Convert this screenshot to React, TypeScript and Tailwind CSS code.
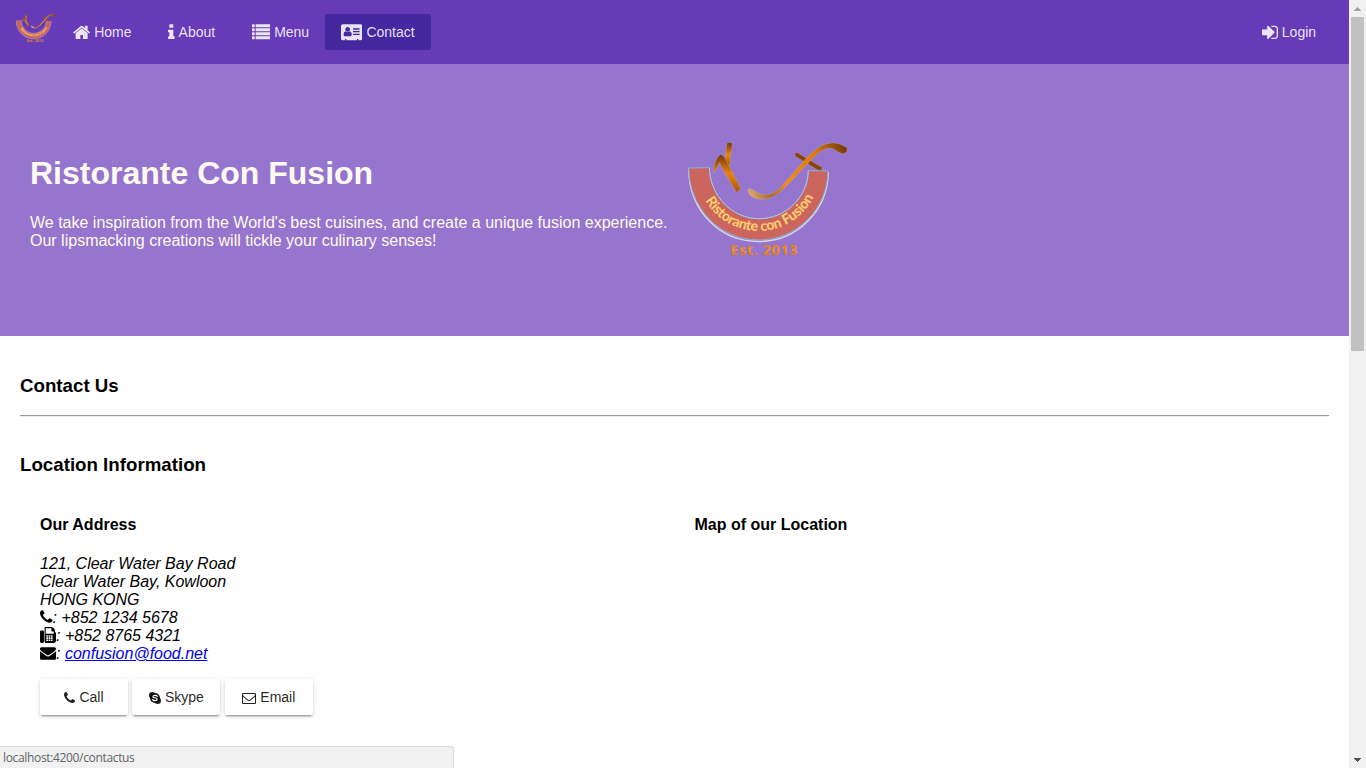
import { useId, type ReactNode } from "react";

type IconDef = { box: string; ratio: number; body: ReactNode };

const icons: Record<string, IconDef> = {
  home: {
    box: "64 0 1664 1792",
    ratio: 1664 / 1792,
    body: <path d="M1472 992v480q0 26-19 45t-45 19h-384v-384h-256v384h-384q-26 0-45-19t-19-45v-480q0-1 .5-3t.5-3l575-474 575 474q1 2 1 6zm223-69l-62 74q-8 9-21 11h-3q-13 0-21-7l-692-577-692 577q-12 8-24 7-13-2-21-11l-62-74q-8-10-7-23.5t11-21.5l719-599q32-26 76-26t76 26l244 204v-195q0-14 9-23t23-9h192q14 0 23 9t9 23v408l219 182q10 8 11 21.5t-7 23.5z" />,
  },
  info: {
    box: "576 0 640 1792",
    ratio: 640 / 1792,
    body: <path d="M1216 1344v128q0 26-19 45t-45 19h-512q-26 0-45-19t-19-45v-128q0-26 19-45t45-19h64v-384h-64q-26 0-45-19t-19-45v-128q0-26 19-45t45-19h384q26 0 45 19t19 45v576h64q26 0 45 19t19 45zm-128-1152v192q0 26-19 45t-45 19h-256q-26 0-45-19t-19-45v-192q0-26 19-45t45-19h256q26 0 45 19t19 45z" />,
  },
  list: {
    box: "0 0 1792 1792",
    ratio: 1,
    body: (
      <>
        {[128, 512, 896, 1280].map((y) => (
          <g key={y}>
            <rect x="0" y={y} width="256" height="290" rx="32" />
            <rect x="350" y={y} width="1442" height="290" rx="32" />
          </g>
        ))}
      </>
    ),
  },
  card: {
    box: "0 0 2048 1792",
    ratio: 2048 / 1792,
    body: (
      <path
        fillRule="evenodd"
        d="M160 128h1728q66 0 113 47t47 113v1216q0 66-47 113t-113 47h-224v-96q0-14-9-23t-23-9h-64q-14 0-23 9t-9 23v96h-1024v-96q0-14-9-23t-23-9h-64q-14 0-23 9t-9 23v96h-224q-66 0-113-47t-47-113v-1216q0-66 47-113t113-47zM1024 1131q0-64-9-117.5t-29.5-103-60.5-78-97-28.5q-6 4-30 18t-37.5 21.5-35.5 17.5-43 14.5-42 4.5-42-4.5-43-14.5-35.5-17.5-37.5-21.5-30-18q-57 0-97 28.5t-60.5 78-29.5 103-9 117.5 37 106.5 91 42.5h512q54 0 91-42.5t37-106.5zM867 605q0-94-66.5-160.5t-160.500-66.500-160.500 66.500-66.500 160.500 66.500 160.500 160.500 66.500 160.500-66.500 66.500-160.500zM1184 512h576q32 0 32 32v64q0 32-32 32h-576q-32 0-32-32v-64q0-32 32-32zM1184 768h576q32 0 32 32v64q0 32-32 32h-576q-32 0-32-32v-64q0-32 32-32zM1184 1024h576q32 0 32 32v64q0 32-32 32h-576q-32 0-32-32v-64q0-32 32-32z"
      />
    ),
  },
  signIn: {
    box: "128 0 1536 1792",
    ratio: 1536 / 1792,
    body: (
      <>
        <path
          d="M1312 896q0 26-19 45l-544 544q-19 19-45 19t-45-19-19-45v-288h-448q-26 0-45-19t-19-45v-384q0-26 19-45t45-19h448v-288q0-26 19-45t45-19 45 19l544 544q19 19 19 45z"
          stroke="currentColor"
          strokeWidth="50"
        />
        <path d="M1664 544v704q0 119-84.5 203.5t-203.5 84.5h-320q-13 0-22.5-9.5t-9.5-22.5q0-4-1-20t-.5-26.5 3-23.5 10-19.5 20.5-6.5h320q66 0 113-47t47-113v-704q0-66-47-113t-113-47h-312l-11.5-1-11.5-3-8-5.5-7-9-2-13.5q0-4-1-20t-.5-26.5 3-23.5 10-19.5 20.5-6.5h320q119 0 203.5 84.5t84.5 203.5z" />
      </>
    ),
  },
  phone: {
    box: "192 0 1408 1792",
    ratio: 1408 / 1792,
    body: <path d="M1600 1240q0 27-10 70.5t-21 68.5q-21 50-122 106-94 51-186 51-27 0-53-3.5t-57.5-12.5-47-14.5-55.5-20.5-49-18q-98-35-175-83-127-79-264-216t-216-264q-48-77-83-175-3-9-18-49t-20.5-55.5-14.5-47-12.5-57.5-3.5-53q0-92 51-186 56-101 106-122 25-11 68.5-21t70.5-10q14 0 21 3 18 6 53 76 11 19 30 54t35 63.5 31 53.5q3 4 17.5 25t21.5 35.5 7 28.5q0 20-28.5 50t-62 55-62 53-28.5 46q0 9 5 22.5t8.5 20.5 14 24 11.5 19q76 137 174 235t235 174q2 1 19 11.5t24 14 20.5 8.5 22.5 5q18 0 46-28.5t53-62 55-62 50-28.5q14 0 28.500 7t35.500 21.500 25 17.500q25 15 53.500 31t63.500 35 54 30q70 35 76 53 3 7 3 21z" />,
  },
  fax: {
    box: "0 0 1792 1792",
    ratio: 1,
    body: (
      <path
        fillRule="evenodd"
        d="M160 384h128q66 0 113 47t47 113v1088q0 66-47 113t-113 47h-128q-66 0-113-47t-47-113v-1088q0-66 47-113t113-47zM1664 542q58 34 93 93t35 129v768q0 106-75 181t-181 75h-864q-66 0-113-47t-47-113v-1536q0-40 28-68t68-28h672q40 0 88 20t76 48l152 152q28 28 48 76t20 88zM640 128v640h896v-256h-160q-40 0-68-28t-28-68v-288zM700 910h190v170h-190zM960 910h190v170h-190zM1220 910h190v170h-190zM700 1160h190v170h-190zM960 1160h190v170h-190zM1220 1160h190v170h-190zM700 1410h190v170h-190zM960 1410h190v170h-190zM1220 1410h190v170h-190z"
      />
    ),
  },
  envelope: {
    box: "0 0 1792 1792",
    ratio: 1,
    body: <path d="M1792 710v794q0 66-47 113t-113 47h-1472q-66 0-113-47t-47-113v-794q44 49 101 87 362 246 497 345 57 42 92.5 65.5t94.5 48 110 24.5h2q51 0 110-24.5t94.5-48 92.5-65.5q170-123 498-345 57-39 100-87zm0-294q0 79-49 151t-122 123q-376 261-468 325-10 7-42.5 31t-54 38.5-52 32.5-57.5 27-50 9h-2q-23 0-50-9t-57.5-27-52-32.5-54-38.5-42.5-31q-91-64-262-182.5t-205-142.5q-62-42-117-115.5t-55-136.5q0-78 41.5-130t118.5-52h1472q65 0 112.5 47t47.5 113z" />,
  },
  envelopeOpen: {
    box: "0 0 1792 1792",
    ratio: 1,
    body: <path d="M1664 1504v-768q-32 36-69 66-268 206-426 338-51 43-83 67t-86.5 48.5-102.5 24.5h-2q-48 0-102.5-24.5t-86.5-48.5-83-67q-158-132-426-338-37-30-69-66v768q0 13 9.5 22.5t22.5 9.5h1472q13 0 22.5-9.5t9.5-22.5zm0-1051v-24.5l-.5-13-3-12.5-5.5-9-9-7.5-14-2.5h-1472q-13 0-22.5 9.5t-9.5 22.5q0 168 147 284 193 152 401 317 6 5 35 29.5t46 37.5 44.5 31.5 50.5 27.5 43 9h2q20 0 43-9t50.5-27.5 44.5-31.5 46-37.5 35-29.5q208-165 401-317 54-43 100.5-115.5t46.5-131.5zm128-37v1088q0 66-47 113t-113 47h-1472q-66 0-113-47t-47-113v-1088q0-66 47-113t113-47h1472q66 0 113 47t47 113z" />,
  },
  skype: {
    box: "0 0 1536 1792",
    ratio: 1536 / 1792,
    body: (
      <>
        <circle cx="420" cy="548" r="420" />
        <circle cx="1116" cy="1244" r="420" />
        <circle cx="768" cy="896" r="650" />
        <path
          d="M1060 690q-50-130-290-130-270 0-270 160 0 105 180 142l180 38q190 42 190 160 0 175-280 175-240 0-300-150"
          fill="none"
          stroke="white"
          strokeWidth="150"
          strokeLinecap="round"
        />
      </>
    ),
  },
};

function Icon({ name, size, className = "" }: { name: string; size: number; className?: string }) {
  const icon = icons[name];
  return (
    <svg
      className={`inline-block shrink-0 ${className}`}
      viewBox={icon.box}
      width={size * icon.ratio}
      height={size}
      fill="currentColor"
      aria-hidden="true"
    >
      {icon.body}
    </svg>
  );
}

function Logo({ className }: { className: string }) {
  const id = useId().replace(/[^a-zA-Z0-9]/g, "");
  return (
    <svg className={`shrink-0 ${className}`} viewBox="0 0 160 116" aria-label="Ristorante con Fusion">
      <defs>
        <linearGradient id={`${id}s`} x1="60" y1="50" x2="160" y2="5" gradientUnits="userSpaceOnUse">
          <stop offset="0" stopColor="#d9a878" />
          <stop offset="0.18" stopColor="#a86a28" />
          <stop offset="0.35" stopColor="#ee8c14" />
          <stop offset="0.7" stopColor="#d87c10" />
          <stop offset="1" stopColor="#6f3506" />
        </linearGradient>
        <linearGradient id={`${id}l`} x1="0" y1="0" x2="0" y2="1">
          <stop offset="0" stopColor="#71380a" />
          <stop offset="0.5" stopColor="#e8820e" />
          <stop offset="1" stopColor="#a85508" />
        </linearGradient>
        <linearGradient id={`${id}t`} x1="0" y1="0" x2="0" y2="1">
          <stop offset="0" stopColor="#c46a12" />
          <stop offset="0.5" stopColor="#f79420" />
          <stop offset="1" stopColor="#c96808" />
        </linearGradient>
        <path id={`${id}p`} d="M9 28A61.500 61 0 0 0 132 28" />
      </defs>
      <path
        d="M.8 26.500C1 68 31 99.500 70.500 99.500S139.500 68 140.300 30"
        fill="none"
        stroke="#d9d5df"
        strokeWidth="1.600"
      />
      <path
        d="M.7 26L21.400 25.700C22 54 44 76.700 71 76.700S120 55 120.300 28.600L140 29C139.600 67 109 98 70.500 98S1 66 .7 26Z"
        fill="#cc655e"
        stroke="#85b3dc"
        strokeWidth="1"
      />
      <path d="M21.400 25.700C22 54 44 76.700 71 76.700S120 55 120.300 28.600" fill="none" stroke="#b4cbe6" strokeWidth=".8" />
      <text
        fontFamily="Lato, 'Open Sans', sans-serif"
        fontSize="14"
        fontWeight="700"
        fill="#ffd775"
        stroke="#f0a650"
        strokeWidth=".25"
        textAnchor="middle"
      >
        <textPath href={`#${id}p`} startOffset="51%" textLength="132">
          Ristorante con Fusion
        </textPath>
      </text>
      <text
        x="42.500"
        y="113.300"
        fontFamily="'Open Sans', sans-serif"
        fontSize="14.500"
        fontWeight="700"
        fill={`url(#${id}t)`}
        textLength="67"
      >
        Est. 2013
      </text>
      <g strokeLinejoin="round" stroke="#c4b4cf" strokeWidth=".3">
        <path d="M39 1Q42-.4 44.400 1.500C44.300 9 41.200 14 42.500 22L38.500 25C36 18 38 8 39 1Z" fill={`url(#${id}l)`} />
        <path d="M26 31C25 23 28 16 32.500 12.500C35 13 37 16 38.600 19L52.800 46.500L48.500 50.500L32.800 24L31.700 20.500C29.500 24 28.500 28 26 31Z" fill={`url(#${id}l)`} />
        <path d="M106.600 11.500L109 10.400L134.400 25.600L133.300 28.600L130 28.300L107.300 14.300Z" fill="#8b460b" />
        <path d="M60 47C64 45.500 67 49.500 72 51.500C80 54.500 87 51 92 46L118 16.500C126 8 134 1.300 144 1C151 .8 155 3.600 159.200 5.800L158.800 9.800C154 14.500 150 9 144 6.500C136 5 130 11 125 16L98 44.500C90 52 85 57 75 57.200C66 57.500 60 54.500 60 47Z" fill={`url(#${id}s)`} />
      </g>
    </svg>
  );
}

function NavButton({ icon, label, active = false }: { icon: string; label: string; active?: boolean }) {
  return (
    <a
      className={`flex h-9 min-w-[88px] items-center justify-center gap-[3.9px] rounded-[2px] px-4 text-sm text-white/[.87] ${
        active ? "bg-[#4527a0]" : ""
      }`}
    >
      <Icon name={icon} size={18.667} />
      <span>{label}</span>
    </a>
  );
}

function ActionButton({ icon, label }: { icon: string; label: string }) {
  return (
    <button className="flex h-9 w-[88px] items-center justify-center gap-[3.9px] rounded-[2px] bg-white text-sm text-black/[.87] shadow-[0_3px_1px_-2px_rgba(0,0,0,0.2),0_2px_2px_0_rgba(0,0,0,0.14),0_1px_5px_0_rgba(0,0,0,0.12)]">
      <Icon name={icon} size={14} className="mt-px" />
      <span>{label}</span>
    </button>
  );
}

export default function App() {
  return (
    <div className="relative flex h-screen overflow-hidden bg-white font-['Liberation_Sans',Arial,sans-serif] text-base leading-[18px] text-black">
      <div className="flex min-w-0 flex-1 flex-col">
        <nav className="flex h-16 shrink-0 items-center bg-[#673ab7] pr-4 pl-4">
          <Logo className="mr-px -mt-2 h-[29px] w-10" />
          <NavButton icon="home" label="Home" />
          <NavButton icon="info" label="About" />
          <NavButton icon="list" label="Menu" />
          <NavButton icon="card" label="Contact" active />
          <div className="flex-1" />
          <NavButton icon="signIn" label="Login" />
        </nav>

        <header className="flex h-[272px] shrink-0 items-start bg-[#9575cd] pl-[30px] text-[#fffaf0]">
          <div className="w-[658px] pt-[91px]">
            <h1 className="text-[32px] leading-9 font-bold">Ristorante Con Fusion</h1>
            <p className="mt-[23px] whitespace-nowrap">
              We take inspiration from the World's best cuisines, and create a unique fusion experience.
              <br />
              Our lipsmacking creations will tickle your culinary senses!
            </p>
          </div>
          <Logo className="mt-[78px] h-[116px] w-40" />
        </header>

        <main className="flex flex-col px-5 pt-[39px]">
          <h3 className="text-[18.72px] leading-[22px] font-bold">Contact Us</h3>
          <hr className="mt-[18px] h-0.5 border-t border-b border-t-[#9a9a9a] border-b-[#eeeeee]" />
          <h3 className="mt-[37px] text-[18.72px] leading-[22px] font-bold">Location Information</h3>
          <div className="mt-10 grid grid-cols-2">
            <section className="pl-5">
              <h4 className="font-bold">Our Address</h4>
              <address className="mt-[21px]">
                121, Clear Water Bay Road
                <br />
                Clear Water Bay, Kowloon
                <br />
                HONG KONG
                <div className="flex h-[18px] items-center">
                  <Icon name="phone" size={16} className="mb-0.5" />
                  <span className="whitespace-pre">: +852 1234 5678</span>
                </div>
                <div className="flex h-[18px] items-center">
                  <Icon name="fax" size={16} className="mb-0.5" />
                  <span className="whitespace-pre">: +852 8765 4321</span>
                </div>
                <div className="flex h-[18px] items-center">
                  <Icon name="envelope" size={16} className="mb-0.5" />
                  <span className="whitespace-pre">
                    : <a className="text-[#0000ee] underline">confusion@food.net</a>
                  </span>
                </div>
              </address>
              <div className="mt-4 flex gap-[4.45px]">
                <ActionButton icon="phone" label="Call" />
                <ActionButton icon="skype" label="Skype" />
                <ActionButton icon="envelopeOpen" label="Email" />
              </div>
            </section>
            <section className="pl-5">
              <h4 className="font-bold">Map of our Location</h4>
            </section>
          </div>
        </main>
      </div>

      <div className="flex w-[17px] shrink-0 flex-col items-center bg-[#f1f1f1]">
        <div className="flex h-[17px] items-center">
          <svg className="h-1 w-[7px]" viewBox="0 0 7 4" shapeRendering="crispEdges">
            <path d="M3 0h1v1h1v1h1v1h1v1H0V3h1V2h1V1h1z" fill="#a3a3a3" />
          </svg>
        </div>
        <div className="h-[334px] w-[13px] bg-[#c1c1c1]" />
        <div className="flex-1" />
        <div className="flex h-[17px] items-center">
          <svg className="h-1 w-[7px]" viewBox="0 0 7 4" shapeRendering="crispEdges">
            <path d="M0 0h7v1H6v1H5v1H4v1H3V3H2V2H1V1H0z" fill="#505050" />
          </svg>
        </div>
      </div>

      <div className="absolute bottom-0 left-0 flex h-[22px] w-[454px] items-center rounded-tr-[4px] border-t border-r border-[#dadada] bg-[#f1f1f1] pt-px pl-[3px] font-['Open_Sans','Noto_Sans',sans-serif] text-xs tracking-[-0.34px] text-[#5f6368]">
        localhost:4200/contactus
      </div>
    </div>
  );
}
